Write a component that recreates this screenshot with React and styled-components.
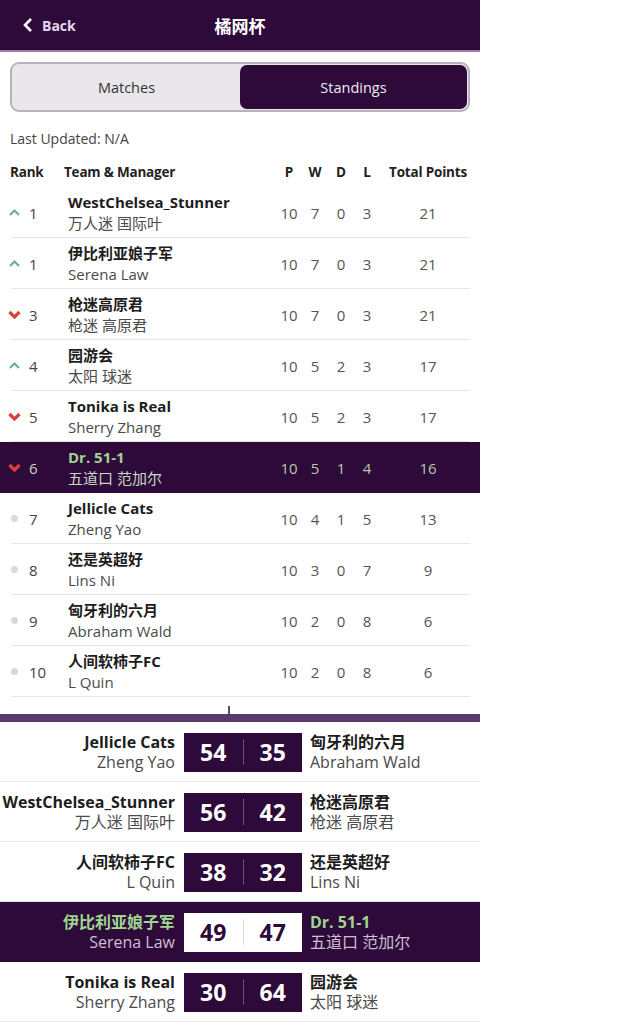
import React from 'react';
import styled, { createGlobalStyle } from 'styled-components';

const GlobalStyle = createGlobalStyle`
  body {
    margin: 0;
    background: #ffffff;
    font-family: "Open Sans", "Noto Sans CJK SC", sans-serif;
    color: #222;
  }
`;

const PURPLE = '#2e0a3a';

const Page = styled.div`
  width: 480px;
`;

const Header = styled.header`
  height: 50px;
  background: ${PURPLE};
  border-bottom: 2px solid #9b7fa8;
  display: grid;
  grid-template-columns: 1fr auto 1fr;
  align-items: center;
`;

const BackButton = styled.div`
  display: flex;
  align-items: center;
  gap: 9px;
  padding-left: 23px;
  color: #e6d9ec;
  font-size: 14px;
  font-weight: 700;
`;

const Title = styled.h1`
  margin: 0;
  color: #ffffff;
  font-size: 17px;
  font-weight: 700;
`;

const Segmented = styled.div`
  margin: 10px 10px 0;
  height: 50px;
  box-sizing: border-box;
  border: 2px solid #b9b2bc;
  border-radius: 9px;
  background: #e9e7ea;
  display: flex;
  padding: 1px;
`;

const Tab = styled.div`
  flex: 1;
  display: flex;
  align-items: center;
  justify-content: center;
  border-radius: 7px;
  font-size: 14.5px;
  color: ${(p) => (p.$active ? '#f1e9f4' : '#333')};
  background: ${(p) => (p.$active ? PURPLE : 'transparent')};
`;

const Updated = styled.div`
  margin: 19px 10px 0;
  font-size: 14px;
  color: #444;
  line-height: 16px;
`;

const Grid = styled.div`
  display: grid;
  grid-template-columns: 64px 212px 26px 26px 26px 26px 96px;
  align-items: center;
`;

const HeadRow = styled(Grid)`
  margin-top: 16px;
  height: 16px;
  font-size: 13.5px;
  font-weight: 700;
  color: #222;
`;

const HeadCell = styled.div`
  text-align: ${(p) => p.$align || 'center'};
  padding-left: ${(p) => p.$pad || 0}px;
  white-space: nowrap;
  letter-spacing: -0.2px;
`;

const Table = styled.div`
  margin-top: 8px;
`;

const Row = styled(Grid)`
  height: 51px;
  box-sizing: border-box;
  background: ${(p) =>
    p.$me
      ? PURPLE
      : 'linear-gradient(#e4e4e4, #e4e4e4) no-repeat left 12px bottom 0 / calc(100% - 22px) 1px'};
`;

const RankCell = styled.div`
  display: flex;
  align-items: center;
  padding-left: 8px;
  font-size: 15px;
  color: ${(p) => (p.$me ? '#c8d6be' : '#444')};
`;

const IconBox = styled.span`
  width: 13px;
  display: inline-flex;
  justify-content: center;
  margin-right: 8px;
`;

const Dot = styled.span`
  width: 7px;
  height: 7px;
  border-radius: 50%;
  background: #d9d9d9;
`;

const TeamCell = styled.div`
  padding-left: 4px;
  display: flex;
  flex-direction: column;
  line-height: 21px;
  font-size: 15px;
  white-space: nowrap;
`;

const TeamName = styled.span`
  font-weight: 700;
  color: ${(p) => (p.$me ? '#9fd58f' : '#1d1d1d')};
`;

const Manager = styled.span`
  color: ${(p) => (p.$me ? '#c9d8c2' : '#4a4a4a')};
`;

const Num = styled.div`
  text-align: center;
  font-size: 15px;
  color: ${(p) => (p.$me ? '#b9c9ad' : '#555')};
`;

const Divider = styled.div`
  margin-top: 17px;
  height: 8px;
  background: #5a3a6c;
  display: flex;
  justify-content: center;
  padding-right: 22px;
  &::before {
    content: '';
    width: 2px;
    height: 8px;
    margin-top: -8px;
    background: #555;
  }
`;

const MatchRow = styled.div`
  height: 60px;
  box-sizing: border-box;
  display: grid;
  grid-template-columns: 184px 118px 1fr;
  align-items: center;
  background: ${(p) =>
    p.$me
      ? PURPLE
      : 'linear-gradient(#e6e6e6, #e6e6e6) no-repeat left 0 bottom 0 / 100% 1px'};
`;

const Side = styled.div`
  display: flex;
  flex-direction: column;
  align-items: ${(p) => (p.$right ? 'flex-start' : 'flex-end')};
  padding: ${(p) => (p.$right ? '0 0 0 8px' : '0 9px 0 0')};
  font-size: 16px;
  line-height: 20px;
  white-space: nowrap;
`;

const ScoreBox = styled.div`
  height: 39px;
  display: grid;
  grid-template-columns: 1fr 1px 1fr;
  align-items: center;
  background: ${(p) => (p.$me ? '#ffffff' : PURPLE)};
  color: ${(p) => (p.$me ? PURPLE : '#ffffff')};
  font-size: 23px;
  font-weight: 700;
  text-align: center;
`;

const ScoreSep = styled.span`
  height: 26px;
  background: ${(p) => (p.$me ? '#d8d8d8' : '#6b4f76')};
`;

const MatchManager = styled.span`
  color: ${(p) => (p.$me ? '#cdbfd3' : '#4a4a4a')};
`;

const UpIcon = () => (
  <svg width="11" height="7" viewBox="0 0 11 7">
    <path d="M1 6 L5.5 1.5 L10 6" fill="none" stroke="#5fb394" strokeWidth="2" />
  </svg>
);

const DownIcon = () => (
  <svg width="13" height="9" viewBox="0 0 13 9">
    <path d="M1.5 2 L6.5 7 L11.5 2" fill="none" stroke="#d9423a" strokeWidth="3.2" />
  </svg>
);

const ChevronLeft = () => (
  <svg width="10" height="16" viewBox="0 0 10 16">
    <path d="M8 2 L2 8 L8 14" fill="none" stroke="#ffffff" strokeWidth="2.6" />
  </svg>
);

const standings = [
  { move: 'up', rank: 1, team: 'WestChelsea_Stunner', mgr: '万人迷 国际叶', p: 10, w: 7, d: 0, l: 3, pts: 21 },
  { move: 'up', rank: 1, team: '伊比利亚娘子军', mgr: 'Serena Law', p: 10, w: 7, d: 0, l: 3, pts: 21 },
  { move: 'down', rank: 3, team: '枪迷高原君', mgr: '枪迷 高原君', p: 10, w: 7, d: 0, l: 3, pts: 21 },
  { move: 'up', rank: 4, team: '园游会', mgr: '太阳 球迷', p: 10, w: 5, d: 2, l: 3, pts: 17 },
  { move: 'down', rank: 5, team: 'Tonika is Real', mgr: 'Sherry Zhang', p: 10, w: 5, d: 2, l: 3, pts: 17 },
  { move: 'down', rank: 6, team: 'Dr. 51-1', mgr: '五道口 范加尔', p: 10, w: 5, d: 1, l: 4, pts: 16, me: true },
  { move: 'same', rank: 7, team: 'Jellicle Cats', mgr: 'Zheng Yao', p: 10, w: 4, d: 1, l: 5, pts: 13 },
  { move: 'same', rank: 8, team: '还是英超好', mgr: 'Lins Ni', p: 10, w: 3, d: 0, l: 7, pts: 9 },
  { move: 'same', rank: 9, team: '匈牙利的六月', mgr: 'Abraham Wald', p: 10, w: 2, d: 0, l: 8, pts: 6 },
  { move: 'same', rank: 10, team: '人间软柿子FC', mgr: 'L Quin', p: 10, w: 2, d: 0, l: 8, pts: 6 },
];

const matches = [
  { home: ['Jellicle Cats', 'Zheng Yao'], away: ['匈牙利的六月', 'Abraham Wald'], score: [54, 35] },
  { home: ['WestChelsea_Stunner', '万人迷 国际叶'], away: ['枪迷高原君', '枪迷 高原君'], score: [56, 42] },
  { home: ['人间软柿子FC', 'L Quin'], away: ['还是英超好', 'Lins Ni'], score: [38, 32] },
  { home: ['伊比利亚娘子军', 'Serena Law'], away: ['Dr. 51-1', '五道口 范加尔'], score: [49, 47], me: true },
  { home: ['Tonika is Real', 'Sherry Zhang'], away: ['园游会', '太阳 球迷'], score: [30, 64] },
];

const MoveIcon = ({ move }) => {
  if (move === 'up') return <UpIcon />;
  if (move === 'down') return <DownIcon />;
  return <Dot />;
};

export default function App() {
  return (
    <Page>
      <GlobalStyle />
      <Header>
        <BackButton>
          <ChevronLeft />
          Back
        </BackButton>
        <Title>橘网杯</Title>
        <div />
      </Header>

      <Segmented>
        <Tab>Matches</Tab>
        <Tab $active>Standings</Tab>
      </Segmented>

      <Updated>Last Updated: N/A</Updated>

      <HeadRow>
        <HeadCell $align="left" $pad={10}>Rank</HeadCell>
        <HeadCell $align="left">Team &amp; Manager</HeadCell>
        <HeadCell>P</HeadCell>
        <HeadCell>W</HeadCell>
        <HeadCell>D</HeadCell>
        <HeadCell>L</HeadCell>
        <HeadCell>Total Points</HeadCell>
      </HeadRow>

      <Table>
        {standings.map((s, i) => (
          <Row key={i} $me={s.me}>
            <RankCell $me={s.me}>
              <IconBox>
                <MoveIcon move={s.move} />
              </IconBox>
              {s.rank}
            </RankCell>
            <TeamCell>
              <TeamName $me={s.me}>{s.team}</TeamName>
              <Manager $me={s.me}>{s.mgr}</Manager>
            </TeamCell>
            <Num $me={s.me}>{s.p}</Num>
            <Num $me={s.me}>{s.w}</Num>
            <Num $me={s.me}>{s.d}</Num>
            <Num $me={s.me}>{s.l}</Num>
            <Num $me={s.me}>{s.pts}</Num>
          </Row>
        ))}
      </Table>

      <Divider />

      {matches.map((m, i) => (
        <MatchRow key={i} $me={m.me}>
          <Side>
            <TeamName $me={m.me}>{m.home[0]}</TeamName>
            <MatchManager $me={m.me}>{m.home[1]}</MatchManager>
          </Side>
          <ScoreBox $me={m.me}>
            <span>{m.score[0]}</span>
            <ScoreSep $me={m.me} />
            <span>{m.score[1]}</span>
          </ScoreBox>
          <Side $right>
            <TeamName $me={m.me}>{m.away[0]}</TeamName>
            <MatchManager $me={m.me}>{m.away[1]}</MatchManager>
          </Side>
        </MatchRow>
      ))}
    </Page>
  );
}
